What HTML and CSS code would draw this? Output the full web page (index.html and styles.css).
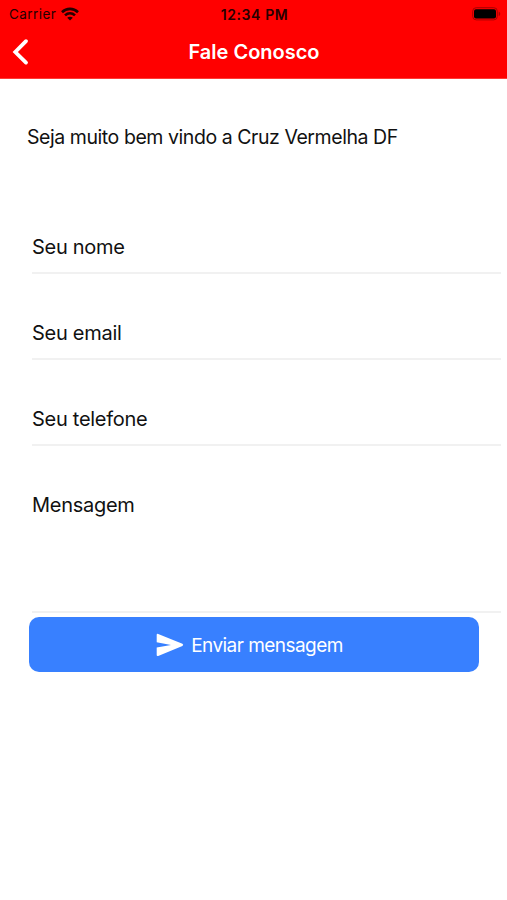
FILE: index.html
```html
<!DOCTYPE html>
<html lang="pt-BR">
<head>
<meta charset="utf-8">
<title>Fale Conosco</title>
<link rel="stylesheet" href="styles.css">
</head>
<body>
<header class="header">
  <div class="status">
    <div class="carrier"><span class="carrier-name">Carrier</span>
      <svg class="wifi" viewBox="0 0 18 14" width="18" height="14" fill="none" stroke="#250000" stroke-width="2.600"><path d="M1 5.200C5.500.8 12.500.8 17 5.200M4 8.400c2.900-2.700 7.100-2.700 10 0"/><path d="M9 13.500 6.200 10.800c1.600-1.400 4-1.400 5.600 0z" fill="#250000" stroke="none"/></svg>
    </div>
    <span class="clock">12:34 PM</span>
    <svg class="battery" width="29" height="14" viewBox="0 0 29 14"><rect x=".7" y=".7" width="24.600" height="12.200" rx="3.500" fill="none" stroke="#a80000" stroke-width="1"/><rect x="2" y="2.200" width="22" height="9.200" rx="2" fill="#000"/><path d="M26.700 4.500c2 .8 2 3.800 0 4.600z" fill="#a80000"/></svg>
  </div>
  <nav class="nav">
    <svg class="back" width="18" height="28" viewBox="0 0 18 28" fill="none" stroke="#fff" stroke-width="3.800" stroke-linecap="round" stroke-linejoin="miter"><path d="M14 3.200 3.300 14 14 24.600"/></svg>
    <h1 class="title">Fale Conosco</h1>
    <span></span>
  </nav>
</header>
<main class="content">
  <p class="welcome">Seja muito bem vindo a Cruz Vermelha DF</p>
  <form class="form">
    <div class="field"><span class="label">Seu nome</span></div>
    <div class="field"><span class="label">Seu email</span></div>
    <div class="field"><span class="label">Seu telefone</span></div>
    <div class="field message"><span class="label">Mensagem</span></div>
    <button class="send" type="button">
      <svg class="send-icon" width="28" height="24" viewBox="0 0 28 24" fill="#fff"><path d="M2.200.9Q.7.400.7 1.800V9.300L15 11.900.7 14.500v7.600q0 1.300 1.500.8L26.400 13q1.600-1.100 0-2.200z"/></svg>
      <span class="send-text">Enviar mensagem</span>
    </button>
  </form>
</main>
</body>
</html>
```
FILE: styles.css
```css
* { box-sizing: border-box; }
body { margin: 0; height: 900px; background: #fff; color: #111; font-family: Inter, "Liberation Sans", sans-serif; overflow: hidden; }
.header { height: 79px; background: #f00; border-bottom: 1px solid #ff3b35; }
.status { height: 27px; display: grid; grid-template-columns: 1fr auto 1fr; align-items: center; padding: 0 6px 0 9px; color: #250000; font-size: 13.5px; line-height: 27px; }
.carrier { display: flex; align-items: center; gap: 5px; }
.carrier-name { padding-top: 1px; letter-spacing: .45px; }
.wifi { margin-top: -1px; }
.clock { margin-right: 1px; font-size: 14px; font-weight: 600; letter-spacing: .6px; }
.battery { justify-self: end; }
.nav { height: 49px; display: grid; grid-template-columns: 1fr auto 1fr; align-items: center; padding: 0 11px 0 12px; }
.title { margin: 0; padding-top: 2px; color: #fff; font-size: 20px; font-weight: 600; line-height: 47px; }
.content { padding: 43px 6px 0 27px; }
.welcome { margin: 0; font-size: 19.5px; line-height: 30px; letter-spacing: -.44px; white-space: nowrap; }
.form { padding-top: 36px; }
.field { height: 86px; margin-left: 5px; padding-top: 43px; border-bottom: 2px solid #f1f1f1; }
.message { height: 167px; }
.label { display: block; width: max-content; font-size: 20px; line-height: 32px; letter-spacing: -.28px; }
.send { display: flex; align-items: center; justify-content: center; gap: 7px; width: 450px; height: 55px; margin: 4px 0 0 2px; padding: 0 9px 0 0; border: 0; border-radius: 10px; background: #3880ff; color: #fff; font: 19px Inter, "Liberation Sans", sans-serif; }
.send-text { padding-top: 1px; letter-spacing: -.54px; }
```
